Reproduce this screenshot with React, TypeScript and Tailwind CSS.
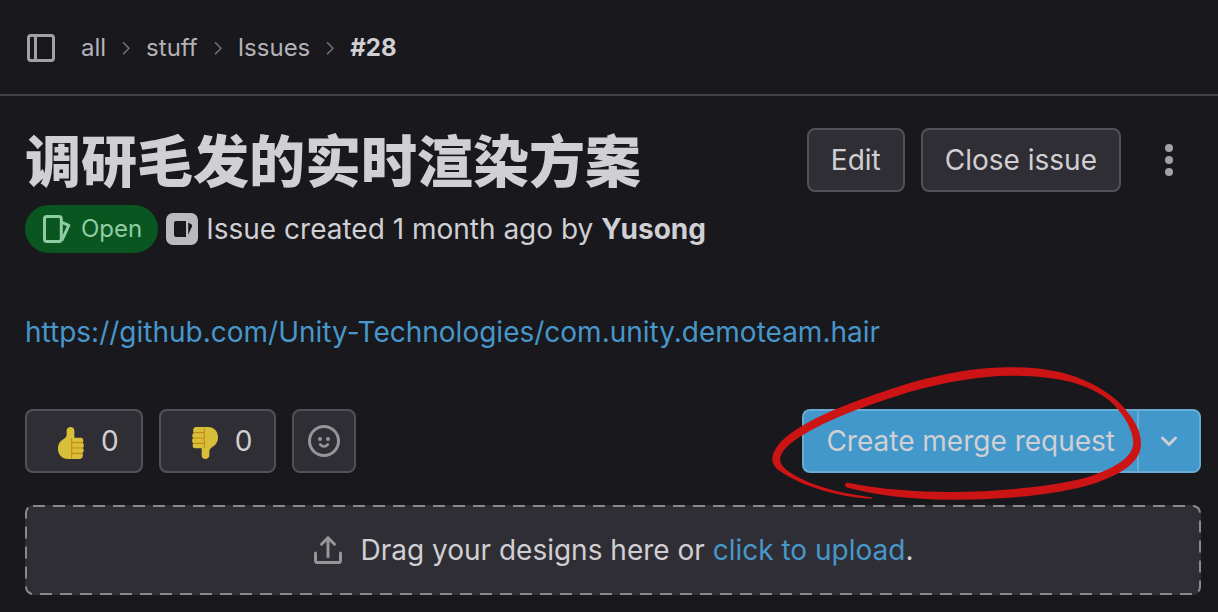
import type { ReactNode } from "react";

function SidebarIcon() {
  return (
    <svg viewBox="0 0 16 16" className="size-8" fill="none" stroke="currentColor" strokeWidth="1.5" aria-hidden="true">
      <rect x="1.75" y="1.75" width="12.5" height="12.5" rx="1.2" />
      <path d="M5.25 1.75v12.5" />
    </svg>
  );
}

function Separator() {
  return (
    <svg viewBox="0 0 16 16" className="mx-3 h-4 w-4 text-[#737278]" fill="none" stroke="currentColor" strokeWidth="1.6" strokeLinecap="round" strokeLinejoin="round" aria-hidden="true">
      <path d="M5.5 2.7 11 8.2 5.5 13.7" />
    </svg>
  );
}

function IssueIcon() {
  return (
    <svg viewBox="0 0 16 16" className="size-8" fill="none" stroke="currentColor" strokeWidth="1.5" strokeLinejoin="round" aria-hidden="true">
      <rect x="1.75" y="1.75" width="8.4" height="12.5" rx="1.2" />
      <path d="M10.2 4.6 13.9 6.2 10.4 13.8" />
    </svg>
  );
}

function IssueTypeIcon() {
  return (
    <svg viewBox="0 0 16 16" className="size-8" aria-hidden="true">
      <path
        fill="currentColor"
        fillRule="evenodd"
        d="M3.5 0h9a3.5 3.5 0 0 1 3.5 3.5v9a3.5 3.5 0 0 1-3.5 3.5h-9a3.5 3.5 0 0 1-3.5-3.5v-9a3.5 3.5 0 0 1 3.5-3.5ZM5 4a1 1 0 0 0-1 1v6a1 1 0 0 0 1 1h5V4ZM11.1 4.7v6.2l1.9-4.2a.8.8 0 0 0-.4-1.1Z"
      />
    </svg>
  );
}

function Thumb({ down = false }: { down?: boolean }) {
  return (
    <svg viewBox="0 0 78 96" className={down ? "h-8 w-[26px] rotate-180" : "h-8 w-[26px]"} aria-hidden="true">
      <path
        fill="#d8bf39"
        d="M26 11C26 4 31 0 38 0s11 4 11 11v21h20c8 0 9 12 4 15 6 2 6 13 1 16 5 3 4 12-1 15 3 6 2 18-7 18H31C11 96 0 82 0 65c0-15 8-24 17-29 6-4 9-8 9-13Z"
      />
      <path fill="none" stroke="#c68a16" strokeWidth="3.5" strokeLinecap="round" d="M41 35c-5 4 4 7 0 12s4 8 0 15 4 8 0 15v15M43 47h30M43 63h30M43 79h29" />
    </svg>
  );
}

function SmileIcon() {
  return (
    <svg viewBox="0 0 32 32" className="size-8" fill="none" stroke="currentColor" strokeWidth="3" aria-hidden="true">
      <circle cx="16" cy="16" r="14.5" />
      <circle cx="12" cy="14" r="2" fill="currentColor" stroke="none" />
      <circle cx="20" cy="14" r="2" fill="currentColor" stroke="none" />
      <path d="M12.2 19.5q3.8 4 7.6 0" strokeLinecap="round" strokeWidth="2.6" />
    </svg>
  );
}

function UploadIcon() {
  return (
    <svg viewBox="0 0 32 32" className="size-8" fill="none" stroke="currentColor" strokeWidth="3" strokeLinecap="round" strokeLinejoin="round" aria-hidden="true">
      <path d="M16 22.5V4M9.5 10.2 16 3.7l6.5 6.5M3.5 19v7.5a2 2 0 0 0 2 2h21a2 2 0 0 0 2-2V19" />
    </svg>
  );
}

function ActionButton({ children }: { children: ReactNode }) {
  return (
    <button className="h-16 whitespace-nowrap rounded-lg border-2 border-[#535158] bg-[#302e35] px-[22px] text-[28px]">
      {children}
    </button>
  );
}

function VoteButton({ down = false, label }: { down?: boolean; label: string }) {
  return (
    <button aria-label={label} className="flex h-16 items-center gap-2 rounded-lg border-2 border-[#535158] bg-[#302e35] px-[22px] text-[28px]">
      <span className="flex w-11 justify-center pt-1">
        <Thumb down={down} />
      </span>
      <span>0</span>
    </button>
  );
}

function Scribble() {
  return (
    <svg viewBox="0 0 1374 480" className="pointer-events-none absolute -top-[54px] -left-[42px] h-40 w-[458px]" aria-hidden="true">
      <path
        fill="#cd1414"
        d="M335 431C215 425 110 385 55 345C25 322 35 290 65 258C130 195 270 140 450 84C580 48 670 37 750 37C900 35 1000 75 1075 140C1125 190 1143 230 1143 265C1143 320 1090 355 1010 383C880 425 700 434 570 434C450 433 350 420 262 398C250 392 254 380 268 384C360 403 470 411 570 411C720 410 880 395 985 366C1070 338 1120 305 1120 262C1118 225 1095 180 1050 138C980 80 880 63 750 62C660 63 570 78 450 110C290 160 160 210 90 267C55 298 50 320 80 345C140 390 240 415 335 427Z"
      />
    </svg>
  );
}

export default function App() {
  return (
    <div className="min-h-screen bg-[#19181d] font-[Inter,'Noto_Sans_CJK_SC',sans-serif] text-[#d0cfd3]">
      <header className="flex h-24 items-center border-b-2 border-[#434248] pt-0.5 pl-[25px] text-2xl text-[#b3b2b8]">
        <button aria-label="Toggle sidebar" className="mr-6 text-[#a2a1a6]">
          <SidebarIcon />
        </button>
        <nav aria-label="Breadcrumb" className="flex items-center">
          <a href="#all">all</a>
          <Separator />
          <a href="#stuff">stuff</a>
          <Separator />
          <a href="#issues">Issues</a>
          <Separator />
          <a href="#28" className="font-bold text-[#d0cfd3]">#28</a>
        </nav>
      </header>

      <main className="pt-8 pr-[17px] pb-4 pl-[25px]">
        <div className="flex items-start justify-between">
          <h1 className="text-[56px] leading-[68px] font-black">调研毛发的实时渲染方案</h1>
          <div className="flex gap-4">
            <ActionButton>Edit</ActionButton>
            <ActionButton>Close issue</ActionButton>
            <button aria-label="More actions" className="flex size-16 items-center justify-center text-[#a2a1a6]">
              <svg viewBox="0 0 32 32" className="size-8" fill="currentColor" aria-hidden="true">
                <circle cx="16" cy="4" r="4" />
                <circle cx="16" cy="16" r="4" />
                <circle cx="16" cy="28" r="4" />
              </svg>
            </button>
          </div>
        </div>

        <div className="mt-[9px] flex items-center gap-2 text-[28px]">
          <span className="flex h-12 items-center gap-2 rounded-full bg-[#0a5620] px-4 text-2xl text-[#8fcba3]">
            <IssueIcon />
            Open
          </span>
          <span className="text-[#bab9be]">
            <IssueTypeIcon />
          </span>
          <p>
            Issue created 1 month ago by <strong>Yusong</strong>
          </p>
        </div>

        <p className="mt-[58px] text-[28px] leading-[42px]">
          <a href="https://github.com/Unity-Technologies/com.unity.demoteam.hair" className="text-[#4797ca]">
            https://github.com/Unity-Technologies/com.unity.demoteam.hair
          </a>
        </p>

        <div className="mt-14 flex items-center justify-between">
          <div className="flex gap-4">
            <VoteButton label="Thumbs up 0" />
            <VoteButton label="Thumbs down 0" down />
            <button aria-label="Add reaction" className="flex size-16 items-center justify-center rounded-lg border-2 border-[#535158] bg-[#302e35] text-[#96959a]">
              <SmileIcon />
            </button>
          </div>
          <div className="relative flex">
            <button className="h-16 rounded-l-lg border-2 border-r-0 border-[#68abd3] bg-[#4298cb] px-[22px] text-[28px]">
              Create merge request
            </button>
            <button aria-label="Merge request options" className="flex h-16 w-16 items-center justify-center rounded-r-lg border-2 border-[#68abd3] bg-[#4298cb]">
              <svg viewBox="0 0 32 32" className="size-8" fill="none" stroke="currentColor" strokeWidth="3" strokeLinecap="round" strokeLinejoin="round" aria-hidden="true">
                <path d="M9.5 13 16 19.5 22.5 13" />
              </svg>
            </button>
            <Scribble />
          </div>
        </div>

        <div className="relative mt-8 flex h-[90px] items-center justify-center gap-4 overflow-hidden rounded-lg bg-[#302e35] text-[28px]">
          <svg className="pointer-events-none absolute inset-0 size-full" aria-hidden="true">
            <rect width="100%" height="100%" rx="8" fill="none" stroke="#89888d" strokeWidth="4" strokeDasharray="12 8" />
          </svg>
          <span className="text-[#96959a]">
            <UploadIcon />
          </span>
          <p>
            Drag your designs here or <button className="text-[#4797ca]">click to upload</button>.
          </p>
        </div>
      </main>
    </div>
  );
}
